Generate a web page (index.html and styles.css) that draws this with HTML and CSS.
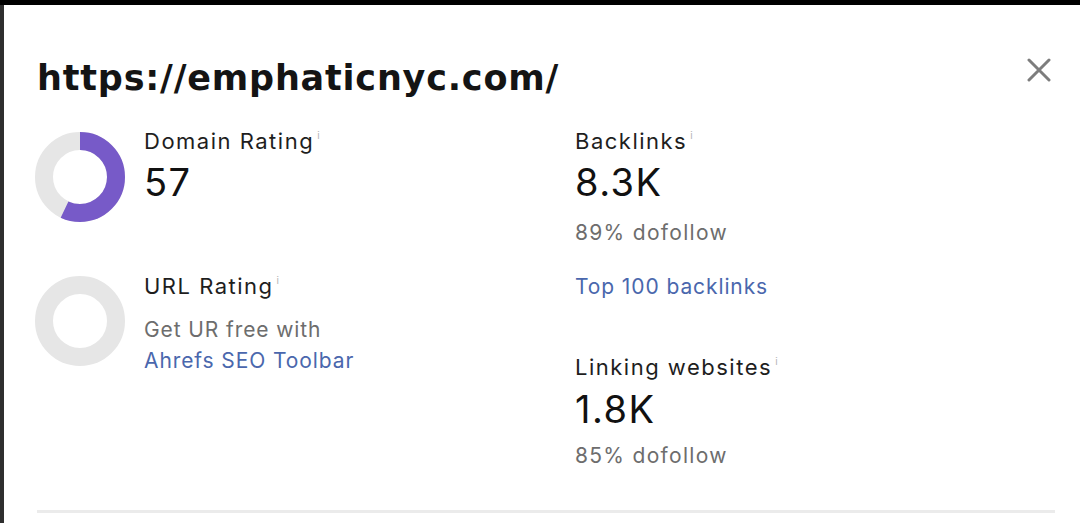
FILE: index.html
```html
<!DOCTYPE html>
<html>
<head>
<meta charset="utf-8">
<link rel="stylesheet" href="styles.css">
</head>
<body>
<div class="frame">
  <div class="panel">
    <div class="header">
      <h1 class="url">https://emphaticnyc.com/</h1>
      <svg class="close" width="24" height="24" viewBox="0 0 24 24"><path d="M2 2 L22 22 M22 2 L2 22" stroke="#7d7d7d" stroke-width="3" stroke-linecap="round"/></svg>
    </div>
    <div class="grid">
      <div class="col">
        <div class="metric-row first">
          <svg class="donut" width="90" height="90" viewBox="0 0 90 90">
            <circle cx="45" cy="45" r="36" fill="none" stroke="#e6e6e6" stroke-width="18"/>
            <circle cx="45" cy="45" r="36" fill="none" stroke="#775ac8" stroke-width="18" stroke-dasharray="128.9 226.2" transform="rotate(-90 45 45)"/>
          </svg>
          <div class="metric">
            <div class="label">Domain Rating<span class="info">i</span></div>
            <div class="value">57</div>
          </div>
        </div>
        <div class="metric-row second">
          <svg class="donut" width="90" height="90" viewBox="0 0 90 90">
            <circle cx="45" cy="45" r="36" fill="none" stroke="#e6e6e6" stroke-width="18"/>
          </svg>
          <div class="metric">
            <div class="label">URL Rating<span class="info">i</span></div>
            <div class="note">Get UR free with</div>
            <a class="link toolbar">Ahrefs SEO Toolbar</a>
          </div>
        </div>
      </div>
      <div class="col">
        <div class="metric">
          <div class="label">Backlinks<span class="info">i</span></div>
          <div class="value">8.3K</div>
          <div class="sub">89% dofollow</div>
          <a class="link top">Top 100 backlinks</a>
        </div>
        <div class="metric linking">
          <div class="label">Linking websites<span class="info">i</span></div>
          <div class="value">1.8K</div>
          <div class="sub second-sub">85% dofollow</div>
        </div>
      </div>
    </div>
    <div class="divider"></div>
  </div>
</div>
</body>
</html>
```

FILE: styles.css
```css
html, body {
  margin: 0;
  padding: 0;
  background: #000;
}
body {
  width: 1080px;
  height: 523px;
  overflow: hidden;
  font-family: "Inter", "Noto Sans", sans-serif;
}
.frame {
  margin-top: 5px;
  height: 518px;
  border-left: 4px solid #2e2e2e;
  background: #fff;
}
.panel {
  display: flex;
  flex-direction: column;
  height: 518px;
  box-sizing: border-box;
  padding: 0 29px 0 33px;
}
.header {
  display: flex;
  justify-content: space-between;
  align-items: flex-start;
  padding-top: 53px;
}
.url {
  margin: 0;
  font-family: "DejaVu Sans", sans-serif;
  font-weight: bold;
  font-size: 35px;
  line-height: 40px;
  color: #141414;
  letter-spacing: 0.8px;
}
.close {
  margin-top: 0;
}
.grid {
  flex: none;
  display: grid;
  grid-template-columns: 538px 1fr;
  margin-top: 32px;
}
.col {
  display: flex;
  flex-direction: column;
}
.metric-row {
  display: flex;
  gap: 19px;
  align-items: flex-start;
}
.metric-row.second {
  margin-top: 53px;
}
.donut {
  flex: none;
  margin-left: -2px;
  margin-top: 2px;
}
.second .donut {
  margin-top: 1px;
}
.metric {
  display: flex;
  flex-direction: column;
  align-items: flex-start;
}
.label {
  font-size: 22px;
  line-height: 22px;
  letter-spacing: 1.5px;
  color: #1e1e1e;
}
.info {
  font-size: 10px;
  line-height: 10px;
  color: #b5b5b5;
  vertical-align: 10px;
  margin-left: 3px;
  letter-spacing: 0;
}
.value {
  margin-top: 11px;
  font-size: 38px;
  line-height: 38px;
  letter-spacing: 1.5px;
  color: #111;
}
.sub, .note, .link {
  font-size: 21px;
  line-height: 21px;
  letter-spacing: 0.9px;
}
.sub, .note {
  color: #6d6d6d;
}
.sub {
  margin-top: 21px;
  letter-spacing: 1.3px;
}
.sub.second-sub {
  margin-top: 17px;
}
.note {
  margin-top: 22px;
}
.link {
  color: #4a67ad;
}
.link.toolbar {
  margin-top: 10px;
}
.link.top {
  margin-top: 33px;
}
.linking {
  margin-top: 59px;
}
.linking .value {
  margin-top: 12px;
}
.divider {
  margin-top: auto;
  margin-bottom: 10px;
  height: 3px;
  width: 1018px;
  background: #ebebeb;
}
```
